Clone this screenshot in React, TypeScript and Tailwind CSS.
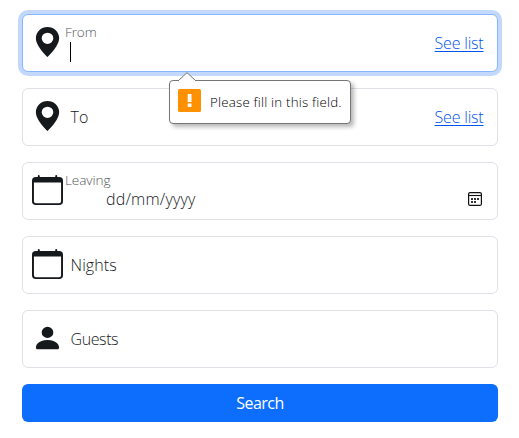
import type { ReactNode } from "react";

const PinIcon = () => (
  <svg viewBox="0 0 16 16" preserveAspectRatio="none" className="h-[30px] w-[31px] shrink-0" fill="currentColor">
    <path d="M8 16s6-5.686 6-10A6 6 0 0 0 2 6c0 4.314 6 10 6 10m0-7a3 3 0 1 1 0-6 3 3 0 0 1 0 6" />
  </svg>
);

const CalendarIcon = () => (
  <svg viewBox="0 0 16 16" preserveAspectRatio="none" className="h-[30px] w-[31px] shrink-0" fill="currentColor">
    <path d="M3.5 0a.5.5 0 0 1 .5.5V1h8V.5a.5.5 0 0 1 1 0V1h1a2 2 0 0 1 2 2v11a2 2 0 0 1-2 2H2a2 2 0 0 1-2-2V3a2 2 0 0 1 2-2h1V.5a.5.5 0 0 1 .5-.5M1 4v10a1 1 0 0 0 1 1h12a1 1 0 0 0 1-1V4z" />
  </svg>
);

const PersonIcon = () => (
  <svg viewBox="0 0 16 16" preserveAspectRatio="none" className="h-[30px] w-[31px] shrink-0" fill="currentColor">
    <path d="M3 14s-1 0-1-1 1-4 6-4 6 3 6 4-1 1-1 1zm5-6a3 3 0 1 0 0-6 3 3 0 0 0 0 6" />
  </svg>
);

const PickerIcon = () => (
  <svg viewBox="0 0 14 14" className="size-3.5 shrink-0" fill="none">
    <rect x="0.6" y="0.6" width="12.8" height="12.8" rx="1.5" stroke="#111" strokeWidth="1.2" />
    <path d="M0.5 3.5h13" stroke="#111" strokeWidth="1.1" />
    <path d="M3 6h2v2H3zM6 6h2v2H6zM9 6h2v2H9zM3 9h2v2H3zM6 9h2v2H6z" fill="#333" />
  </svg>
);

const base = "flex h-[58px] items-start rounded-md border bg-white pl-[9px] pr-[13.5px] pt-3";

function Field({ icon, children, focused }: { icon: ReactNode; children: ReactNode; focused?: boolean }) {
  return (
    <div className={`${base} ${focused ? "border-[#86b7fe] ring-4 ring-[#c2d8fc]" : "border-[#dee2e6]"}`}>
      {icon}
      {children}
    </div>
  );
}

const SeeList = () => (
  <a href="#" className="ml-auto pt-1 text-[16px] leading-6 tracking-[-0.2px] text-[#0055ee] underline underline-offset-2">
    See list
  </a>
);

const Label = ({ children, tracking = "tracking-[0.1px]" }: { children: ReactNode; tracking?: string }) => (
  <span className={`ml-[7.5px] pt-1 text-[16px] leading-6 ${tracking}`}>{children}</span>
);

function Tooltip() {
  return (
    <div className="absolute left-[169px] top-20 flex h-[44px] w-[182px] items-center rounded-[4px] border border-[#767676] bg-white pl-2 shadow-[3px_3px_4px_rgba(0,0,0,0.28)]">
      <svg viewBox="0 0 18 9" className="absolute -top-[9px] left-[8px] h-[9px] w-[18px]">
        <path d="M0 9L9 0.7L18 9" fill="#fff" stroke="#767676" />
      </svg>
      <span className="absolute -top-px left-[9px] h-px w-4 bg-white" />
      <svg viewBox="0 0 23 23" className="-mt-[3px] size-[23px] shrink-0">
        <rect width="23" height="23" rx="1.5" fill="#ff9000" />
        <path d="M9.7 5h3.8v8H9.7zM9.7 14.5h3.8V18H9.7z" fill="#fff" />
      </svg>
      <span className="ml-[9px] whitespace-nowrap text-[13.33px] leading-4 tracking-[0.2px] text-black">Please fill in this field.</span>
    </div>
  );
}

export default function App() {
  return (
    <main className="relative h-[438px] w-[519px] bg-white pl-[22px] pr-[21px] pt-3.5 font-['Open_Sans','Noto_Sans',sans-serif] font-light text-[#16191c]">
      <form className="flex flex-col gap-4" onSubmit={(e) => e.preventDefault()}>
        <Field icon={<PinIcon />} focused>
          <div className="ml-[2px] flex flex-col">
            <span className="-mt-1 text-[13.6px] leading-[18px] tracking-[-0.15px] text-[#55595d]">From</span>
            <span className="ml-[5px] mt-px h-5 w-px bg-black" />
          </div>
          <SeeList />
        </Field>
        <Field icon={<PinIcon />}>
          <Label>To</Label>
          <SeeList />
        </Field>
        <Field icon={<CalendarIcon />}>
          <div className="ml-[2px] flex flex-col">
            <span className="-mt-1 text-[13.6px] leading-[18px] tracking-[-0.1px] text-[#55595d]">Leaving</span>
            <span className="ml-[41px] text-[16px] leading-5 tracking-[0.2px]">dd/mm/yyyy</span>
          </div>
          <div className="ml-auto pr-[1.5px] pt-[17px]">
            <PickerIcon />
          </div>
        </Field>
        <Field icon={<CalendarIcon />}>
          <Label>Nights</Label>
        </Field>
        <Field icon={<PersonIcon />}>
          <Label tracking="tracking-[-0.4px]">Guests</Label>
        </Field>
        <button className="h-[38px] rounded-md bg-[#0d6efd] text-[16px] font-normal leading-6 tracking-[-0.5px] text-white">Search</button>
      </form>
      <Tooltip />
    </main>
  );
}
